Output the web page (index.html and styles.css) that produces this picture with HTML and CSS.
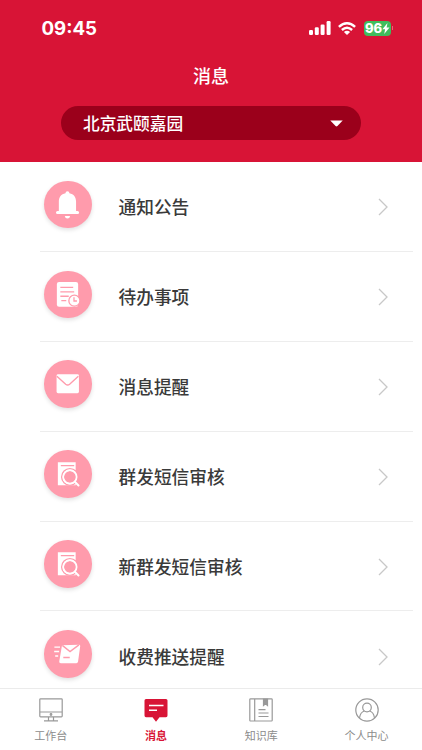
FILE: index.html
```html
<!DOCTYPE html>
<html lang="zh-CN">
<head>
<meta charset="utf-8">
<title>消息</title>
<link rel="stylesheet" href="styles.css">
</head>
<body>
<div class="app">
  <header class="header">
    <div class="status">
      <span class="time">09:45</span>
      <div class="indicators">
        <svg class="signal" viewBox="0 0 22 14" fill="#fff"><rect x="0" y="9" width="4" height="5" rx="1.2"/><rect x="5.8" y="6.3" width="4" height="7.7" rx="1.2"/><rect x="11.6" y="3.6" width="4" height="10.4" rx="1.2"/><rect x="17.6" y="0" width="4" height="14" rx="1.2"/></svg>
        <svg class="wifi" viewBox="0 0 18 13" fill="none" stroke="#fff" stroke-width="2.5"><path d="M.9 4.9Q9-2.3 17.1 4.9M3.9 8Q9 3.5 14.1 8"/><path d="M9 13 5.9 10Q9 7.4 12.1 10Z" fill="#fff" stroke="none"/></svg>
        <div class="battery"><span>96</span><svg viewBox="0 0 8 11"><path d="M5.5 0 .4 6.2h2.7L2.2 11l5.3-6.5H4.6z" fill="#fff"/></svg></div>
        <i class="battery-cap"></i>
      </div>
    </div>
    <h1 class="title">消息</h1>
    <div class="picker"><span>北京武颐嘉园</span><svg viewBox="0 0 14 7"><path d="M.3.2h13.4L8 6.2Q7 7 6 6.2Z" fill="#fff"/></svg></div>
  </header>
  <main class="list">
    <div class="row">
      <svg class="icon" viewBox="0 0 48 48" fill="#fff"><path d="M21.7 12.4a2 2 0 0 1 4 0c4.4.9 6.700 4 6.700 8.300v9.500h1.500a1.500 1.500 0 0 1 0 3.200H13.700a1.500 1.500 0 0 1 0-3.200H15v-9.500c0-4.300 2.300-7.400 6.700-8.300zM21 35.300h5.400q-.4 2.700-2.700 2.700T21 35.300z"/></svg>
      <span class="label">通知公告</span><svg class="arrow" viewBox="0 0 10 18"><path d="m1 1 8 8-8 8"/></svg>
    </div>
    <div class="row">
      <svg class="icon" viewBox="0 0 48 48" fill="none"><rect x="13" y="11" width="21.500" height="25" rx="2.200" fill="#fff"/><path d="M16.500 16.500h13M16.500 21h14M16.500 25.500H25M17.500 30h5" stroke="#ff9bac" stroke-width="1.300"/><circle cx="30.700" cy="30" r="5.600" fill="#fff" stroke="#ff9bac" stroke-width="1.300"/><path d="M30.300 26.500v3.800h3" stroke="#ff9bac" stroke-width="1.300"/></svg>
      <span class="label">待办事项</span><svg class="arrow" viewBox="0 0 10 18"><path d="m1 1 8 8-8 8"/></svg>
    </div>
    <div class="row">
      <svg class="icon" viewBox="0 0 48 48"><rect x="12.700" y="14.500" width="22.600" height="19" rx="1.500" fill="#fff"/><path d="m13 16.500 8.900 8q2 1.600 4 0l8.800-8" fill="none" stroke="#ff9bac" stroke-width="1.400"/></svg>
      <span class="label">消息提醒</span><svg class="arrow" viewBox="0 0 10 18"><path d="m1 1 8 8-8 8"/></svg>
    </div>
    <div class="row">
      <svg class="icon" viewBox="0 0 48 48" fill="none"><path d="M14 12.500h18v23H14z" fill="#fff"/><path d="M17 15.800h13.500" stroke="#ff9bac" stroke-width="1.300"/><circle cx="26.200" cy="27.200" r="8.300" stroke="#ff9bac" stroke-width="1.500"/><circle cx="26.200" cy="27.200" r="6.100" fill="#ff9bac"/><circle cx="26.200" cy="27.200" r="6.800" stroke="#fff" stroke-width="1.700"/><path d="m31.400 32.400 3.500 3.500" stroke="#fff" stroke-width="2" stroke-linecap="round"/></svg>
      <span class="label">群发短信审核</span><svg class="arrow" viewBox="0 0 10 18"><path d="m1 1 8 8-8 8"/></svg>
    </div>
    <div class="row">
      <svg class="icon" viewBox="0 0 48 48" fill="none"><path d="M14 12.500h18v23H14z" fill="#fff"/><path d="M17 15.800h13.500" stroke="#ff9bac" stroke-width="1.300"/><circle cx="26.200" cy="27.200" r="8.300" stroke="#ff9bac" stroke-width="1.500"/><circle cx="26.200" cy="27.200" r="6.100" fill="#ff9bac"/><circle cx="26.200" cy="27.200" r="6.800" stroke="#fff" stroke-width="1.700"/><path d="m31.400 32.400 3.500 3.500" stroke="#fff" stroke-width="2" stroke-linecap="round"/></svg>
      <span class="label">新群发短信审核</span><svg class="arrow" viewBox="0 0 10 18"><path d="m1 1 8 8-8 8"/></svg>
    </div>
    <div class="row">
      <svg class="icon" viewBox="0 0 48 48" fill="none"><path d="m18.200 15.500 17-.7q1.600 0 1.400 1.400L34.400 32q-.3 1.500-1.700 1.500H17q-1.800 0-1.600-1.600z" fill="#fff"/><path d="m18.500 15.500 7.800 6.300 9-6.800" stroke="#ff9bac" stroke-width="1.400"/><path d="M19.500 27.800H26" stroke="#ff9bac" stroke-width="1.500"/><path d="M10.500 17.300h5.700M10.300 21.700h5M11.300 26.300h3" stroke="#fff" stroke-width="1.500"/></svg>
      <span class="label">收费推送提醒</span><svg class="arrow" viewBox="0 0 10 18"><path d="m1 1 8 8-8 8"/></svg>
    </div>
  </main>
  <nav class="tabs">
    <div class="tab">
      <svg viewBox="0 0 24 24"><rect x=".8" y=".8" width="22.4" height="18" rx=".8"/><path d="M1 14h22M9.500 19v3.500M14.500 19v3.500M5 22.800h14"/><circle cx="12" cy="16.500" r=".8"/></svg><span>工作台</span>
    </div>
    <div class="tab active">
      <svg viewBox="0 0 24 24"><path d="M2 1h20q1.500 0 1.500 1.500v15q0 1.700-1.500 1.700h-6.500L12 23.700l-3.500-4.500H2Q.5 19.200.5 17.500v-15Q.5 1 2 1z" fill="#d81436" stroke="none"/><path d="M5 7.500h14.500M5 12.300h8" stroke="#fff" stroke-width="1.400"/></svg><span>消息</span>
    </div>
    <div class="tab">
      <svg viewBox="0 0 24 24"><rect x=".8" y=".8" width="22.400" height="22.200" rx=".8"/><path d="M5.700 1v22M9.500 11.700h7M9.500 15h10M9.500 18.500h10"/><path d="M14.500 1v6.500l2-1.600 2 1.600V1z" fill="#999"/></svg><span>知识库</span>
    </div>
    <div class="tab">
      <svg viewBox="0 0 24 24"><circle cx="12" cy="12" r="11.200"/><circle cx="12" cy="9.500" r="4.300"/><path d="M4.500 20q.8-6 5-7M19.500 20q-.8-6-5-7"/></svg><span>个人中心</span>
    </div>
  </nav>
</div>
</body>
</html>
```
FILE: styles.css
```css
* { box-sizing: border-box; }
body { margin: 0; background: #fff; font-family: "Noto Sans CJK SC", "Noto Sans", sans-serif; }
svg { display: block; flex: none; }
.app { width: 422px; height: 750px; display: flex; flex-direction: column; overflow: hidden; }
.header { height: 162px; flex: none; background: #d81436; color: #fff; }
.status { height: 56px; padding: 0 29px 0 41.500px; display: flex; align-items: center; justify-content: space-between; }
.time { margin-top: 2px; font: 700 18.700px/22px Inter, sans-serif; }
.indicators { display: flex; align-items: center; }
.signal { width: 22px; height: 14px; margin-right: 7px; }
.wifi { width: 18px; height: 13px; margin-right: 8px; }
.battery { width: 27px; height: 15px; border-radius: 4px; background: #40bd5c; display: flex; align-items: center; justify-content: center; font: 800 13px/15px Inter, sans-serif; }
.battery svg { width: 8px; height: 11px; }
.battery-cap { width: 1px; height: 4px; margin-left: 1px; background: #e5677c; }
.title { margin: 6px 0 0; height: 27px; font-size: 18px; line-height: 27px; font-weight: 500; text-align: center; }
.picker { width: 300px; height: 34px; margin: 17px auto 0; padding: 0 18px 0 22px; border-radius: 17px; background: #9b001b; display: flex; align-items: center; justify-content: space-between; font-size: 16.700px; line-height: 34px; font-weight: 500; }
.picker svg { width: 13px; height: 7px; }
.list { flex: 1; min-height: 0; overflow: hidden; }
.row { height: 89.900px; margin: 0 9px 0 40px; padding: 0 25px 0 4px; border-bottom: 1px solid #ededed; display: flex; align-items: center; }
.icon { width: 47.500px; height: 47.500px; margin: 0 27px 4px 0; border-radius: 50%; background: #ff9bac; box-shadow: 0 2px 4px #0000001f; }
.label { flex: 1; font-size: 17.700px; line-height: 26px; font-weight: 500; color: #3a3a3a; }
.arrow { width: 10px; height: 18px; margin-top: 2px; fill: none; stroke: #c8c8c8; stroke-width: 1.300; }
.tabs { height: 62px; flex: none; border-top: 1px solid #ebebeb; display: grid; grid-template-columns: repeat(4, 105.300px); justify-content: start; padding-top: 9px; margin-left: -2px; }
.tab { display: flex; flex-direction: column; align-items: center; color: #8c8c8c; font-size: 11px; line-height: 16px; gap: 5px; }
.tab svg { width: 24px; height: 24px; fill: none; stroke: #999; stroke-width: 1.200; }
.active { color: #d81436; font-weight: 700; }
```
